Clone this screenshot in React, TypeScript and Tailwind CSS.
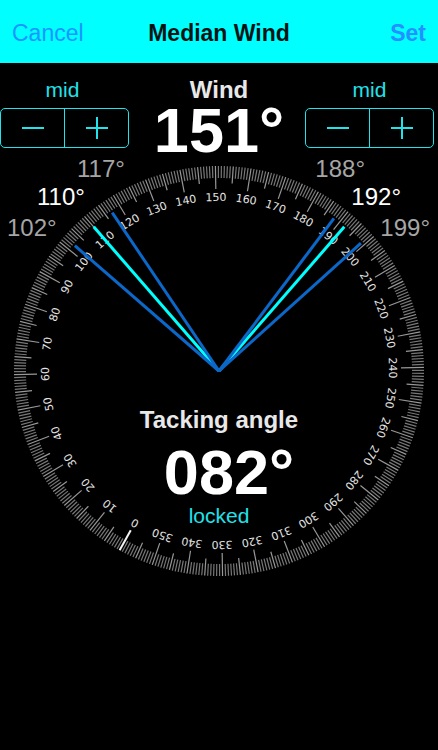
import { clsx } from "clsx";

type Side = "left" | "right";

interface Bearing {
  value: number;
  active: boolean;
  position: string;
}

const HEADING = 151;
const OUTER_RADIUS = 205;
const LABEL_RADIUS = 174;
const NEEDLE_RADIUS = 191;

// Twelve divisions for every ten degrees
const TICKS_PER_LABEL = 12;
const TICK_COUNT = 36 * TICKS_PER_LABEL;

const bearings: Bearing[] = [
  { value: 110, active: true, position: "left-[37px] top-[27px]" },
  { value: 192, active: true, position: "right-[37px] top-[27px]" },
  { value: 117, active: false, position: "left-[77px] -top-px" },
  { value: 102, active: false, position: "left-[7px] top-[58px]" },
  { value: 188, active: false, position: "right-[73px] -top-px" },
  { value: 199, active: false, position: "right-[8px] top-[58px]" },
];

const ticks = Array.from({ length: TICK_COUNT }, (_, i) => i);
const labels = Array.from({ length: 36 }, (_, i) => i * 10);

function tickInnerRadius(tick: number) {
  if (tick % TICKS_PER_LABEL === 0) return 182;
  if (tick % (TICKS_PER_LABEL / 2) === 0) return 188;
  return 193;
}

function tickColor(tick: number) {
  if (tick === 0) return "#f4f4f4";
  if (tick % (TICKS_PER_LABEL / 2) === 0) return "#989898";
  return "#787878";
}

function formatDegrees(value: number) {
  return `${String(value).padStart(3, "0")}°`;
}

function Dial() {
  return (
    <svg
      viewBox="-219 -213 438 426"
      className="block w-full"
      role="img"
      aria-label="Compass dial"
    >
      {ticks.map((tick) => (
        <line
          key={tick}
          y1={-OUTER_RADIUS}
          y2={-tickInnerRadius(tick)}
          stroke={tickColor(tick)}
          strokeWidth={tick === 0 ? 2 : 1.2}
          transform={`rotate(${(tick * 360) / TICK_COUNT - HEADING})`}
        />
      ))}
      {labels.map((deg) => (
        <text
          key={deg}
          y={-LABEL_RADIUS}
          dy={4}
          textAnchor="middle"
          fill="#e4e4e4"
          className="font-['DejaVu_Sans',sans-serif] text-[11px]"
          transform={`rotate(${deg - HEADING})`}
        >
          {deg}
        </text>
      ))}
      {bearings.map(({ value, active }) => (
        <line
          key={value}
          y2={-NEEDLE_RADIUS}
          stroke={active ? "#00ffff" : "#0b68c8"}
          strokeWidth={3}
          transform={`rotate(${value - HEADING})`}
        />
      ))}
    </svg>
  );
}

function Stepper({ side }: { side: Side }) {
  return (
    <div
      className={clsx(
        "flex w-[129px] flex-col gap-1.5 text-[#22e2ea]",
        side === "right" && "mr-1 justify-self-end",
      )}
    >
      <button
        type="button"
        className={clsx(
          "w-full text-[21px] leading-6",
          side === "left" && "pr-1",
        )}
      >
        mid
      </button>
      <div className="flex h-10 rounded-[5px] border border-current">
        <button
          type="button"
          aria-label={`Decrease ${side} limit`}
          className="flex flex-1 items-center justify-center border-r border-current"
        >
          <svg viewBox="0 0 22 22" className="size-[22px]" aria-hidden>
            <path d="M0 11H22" stroke="currentColor" strokeWidth="2" />
          </svg>
        </button>
        <button
          type="button"
          aria-label={`Increase ${side} limit`}
          className="flex flex-1 items-center justify-center"
        >
          <svg viewBox="0 0 22 22" className="size-[22px]" aria-hidden>
            <path d="M0 11H22M11 0V22" stroke="currentColor" strokeWidth="2" />
          </svg>
        </button>
      </div>
    </div>
  );
}

export default function App() {
  return (
    <div className="min-h-screen bg-black font-['Liberation_Sans',Arial,sans-serif] text-white">
      <header className="grid h-[63px] grid-cols-[1fr_auto_1fr] items-center bg-[#00ffff] px-3 pt-0.5 text-[23px] leading-7">
        <button type="button" className="justify-self-start text-[#1c96ff]">
          Cancel
        </button>
        <h1 className="font-bold text-[#001414]">Median Wind</h1>
        <button type="button" className="justify-self-end font-bold text-[#2490ff]">
          Set
        </button>
      </header>

      <main>
        <section className="grid grid-cols-[1fr_auto_1fr] pt-[15px]">
          <Stepper side="left" />
          <div className="text-center font-bold">
            <h2 className="text-2xl leading-6 text-[#e8e8e8]">Wind</h2>
            <p className="text-[63px] leading-[56px]">{formatDegrees(HEADING)}</p>
          </div>
          <Stepper side="right" />
        </section>

        <section className="relative mx-auto max-w-[438px]">
          <Dial />
          {bearings.map(({ value, active, position }) => (
            <span
              key={value}
              className={clsx(
                "absolute text-2xl leading-6",
                position,
                active ? "text-white" : "text-[#a6a6a6]",
              )}
            >
              {formatDegrees(value)}
            </span>
          ))}
          <div className="absolute inset-x-0 top-[250px] flex flex-col items-center">
            <h2 className="text-2xl leading-6 font-bold text-[#e8e8e8]">
              Tacking angle
            </h2>
            <p className="mt-3 pl-5 text-[63px] leading-[56px] font-bold">
              {formatDegrees(82)}
            </p>
            <button type="button" className="mt-1 text-[21px] leading-6 text-[#22e2ea]">
              locked
            </button>
          </div>
        </section>
      </main>
    </div>
  );
}
